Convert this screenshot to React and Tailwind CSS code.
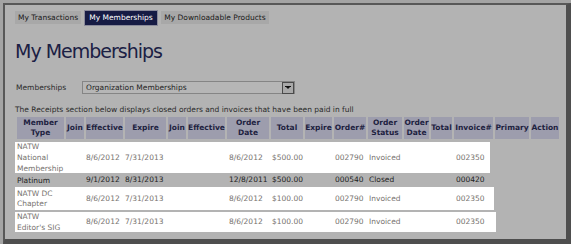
import React from "react";

const cols =
  "grid grid-cols-[47px_18px_37px_41px_18px_37px_42px_32px_27px_32px_34px_25px_21px_39px_34px_28px] gap-x-[2px]";

const headers = [
  ["Member", "Type"],
  ["Join"],
  ["Effective"],
  ["Expire"],
  ["Join"],
  ["Effective"],
  ["Order", "Date"],
  ["Total"],
  ["Expire"],
  ["Order#"],
  ["Order", "Status"],
  ["Order", "Date"],
  ["Total"],
  ["Invoice#"],
  ["Primary"],
  ["Action"],
];

const rows = [
  {
    name: ["NATW", "National", "Membership"],
    join: "8/6/2012",
    expire: "7/31/2013",
    orderDate: "8/6/2012",
    total: "$500.00",
    order: "002790",
    status: "Invoiced",
    invoice: "002350",
    white: "w-[475px] h-[31px]",
    lead: "leading-[11px]",
  },
  {
    name: ["Platinum"],
    join: "9/1/2012",
    expire: "8/31/2013",
    orderDate: "12/8/2011",
    total: "$500.00",
    order: "000540",
    status: "Closed",
    invoice: "000420",
    white: "",
    lead: "leading-[11px]",
  },
  {
    name: ["NATW DC", "Chapter"],
    join: "8/6/2012",
    expire: "7/31/2013",
    orderDate: "8/6/2012",
    total: "$100.00",
    order: "002790",
    status: "Invoiced",
    invoice: "002350",
    white: "w-[479px] h-[23px]",
    lead: "leading-[10px]",
  },
  {
    name: ["NATW", "Editor's SIG"],
    join: "8/6/2012",
    expire: "7/31/2013",
    orderDate: "8/6/2012",
    total: "$100.00",
    order: "002790",
    status: "Invoiced",
    invoice: "002350",
    white: "w-[481px] h-[20px]",
    lead: "leading-[11px]",
  },
];

function Row({ r }) {
  const plain = !r.white;
  return (
    <div
      className={`flex items-center pl-[2px] ${
        plain ? "h-[14px] text-[#1e1e1e]" : `${r.white} bg-white text-[#76726e]`
      }`}
    >
      <div className={`${cols} w-max items-center`}>
        <div className={r.lead}>
          {r.name.map((l) => (
            <div key={l} className="whitespace-nowrap">{l}</div>
          ))}
        </div>
        <div />
        <div>{r.join}</div>
        <div className="whitespace-nowrap">{r.expire}</div>
        <div />
        <div />
        <div className="pl-[2px] whitespace-nowrap">{r.orderDate}</div>
        <div className="pl-[1px]">{r.total}</div>
        <div />
        <div className="pl-[1px]">{r.order}</div>
        <div className="pl-[1px]">{r.status}</div>
        <div />
        <div />
        <div className="pl-[2px]">{r.invoice}</div>
        <div />
        <div />
      </div>
    </div>
  );
}

export default function App() {
  return (
    <div className="w-[571px] h-[244px] bg-[#a4a4a4] pt-[3px] pl-[3px] font-['DejaVu_Sans',sans-serif] text-[7.5px]">
      <div className="h-full border-t-2 border-l-2 border-r-[5px] border-b-[5px] border-t-[#585858] border-l-[#585858] border-r-[#4e4e4e] border-b-[#4e4e4e] bg-[#b3b3b3] pl-[10px] pt-[6px]">
        {/* tabs */}
        <div className="flex gap-[4px] text-[#1a1a1a]">
          <div className="h-[13px] w-[66px] flex items-center justify-center bg-[#a8a8a8]">My Transactions</div>
          <div className="h-[14px] w-[72px] flex items-center justify-center bg-[#161b44] text-white outline outline-1 outline-[#8a8a9a]">
            My Memberships
          </div>
          <div className="h-[13px] w-[108px] flex items-center justify-center bg-[#a8a8a8]">
            My Downloadable Products
          </div>
        </div>

        <h1 className="mt-[17px] text-[19px] leading-[19px] tracking-[-1px] text-[#1b2044]">My Memberships</h1>

        <div className="mt-[20px] flex items-center h-[13px]">
          <div className="w-[67px] pl-[1px] text-[#2a2a2a]">Memberships</div>
          <div className="w-[213px] h-[13px] flex items-center border border-[#858585] bg-[#b6b6b6]">
            <span className="flex-1 pl-[3px] text-[#1f1f1f]">Organization Memberships</span>
            <span className="w-[12px] h-[12px] flex items-center justify-center border border-[#4a4a4a] bg-[#a9a9a9]">
              <svg width="6" height="4" viewBox="0 0 6 4">
                <path d="M0 0H6L3 3Z" fill="#111" />
                <rect x="0" y="0" width="6" height="1" fill="#111" />
              </svg>
            </span>
          </div>
        </div>

        <p className="mt-[10px] leading-[11px] text-[#2a2a2a]">
          The Receipts section below displays closed orders and invoices that have been paid in full
        </p>

        {/* header */}
        <div className="mt-[2px] pl-[2px]">
          <div className={`${cols} w-max h-[22px] font-bold text-[#1d2240] leading-[10px]`}>
            {headers.map((h, i) => (
              <div key={i} className="bg-[#9d9dad] flex flex-col items-center justify-center text-center">
                {h.map((l) => (
                  <div key={l} className="whitespace-nowrap">{l}</div>
                ))}
              </div>
            ))}
          </div>
        </div>

        <div className="mt-[3px]">
          <Row r={rows[0]} />
          <Row r={rows[1]} />
          <Row r={rows[2]} />
          <div className="mt-[2px]">
            <Row r={rows[3]} />
          </div>
        </div>
      </div>
    </div>
  );
}
